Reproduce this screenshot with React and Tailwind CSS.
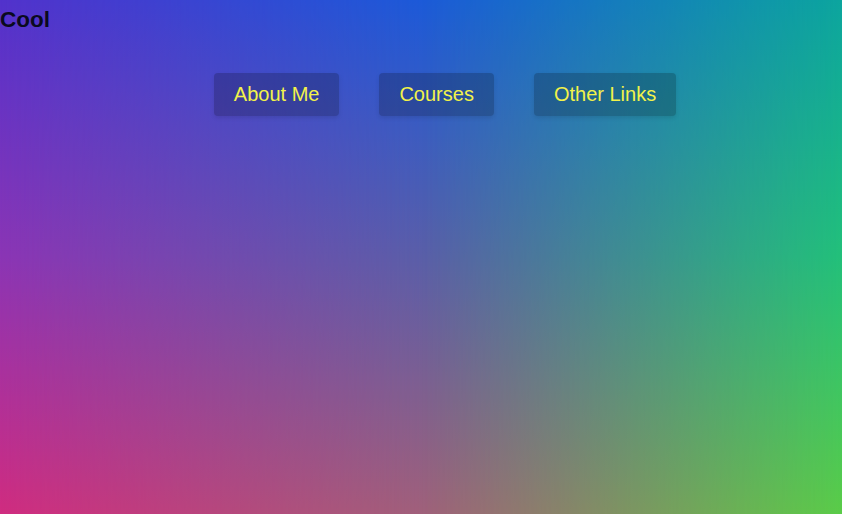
export default function App() {
  return (
    <div className="relative w-full h-[514px] overflow-hidden">
      <div className="absolute inset-0 bg-[linear-gradient(to_bottom,#5232cc,#8b35b5,#d02c80)]" />
      <div className="absolute inset-0 bg-[linear-gradient(to_bottom,#1c5ad8,#5a5ea8,#a0607a)] [mask-image:linear-gradient(to_right,transparent_0%,black_50%)]" />
      <div className="absolute inset-0 bg-[linear-gradient(to_bottom,#0ca59e,#22c07a,#5acc48)] [mask-image:linear-gradient(to_right,transparent_50%,black_100%)]" />
      <div className="relative font-['Liberation_Sans',Arial,sans-serif]">
        <h1 className="text-[22.5px] font-bold leading-[26px] pt-[7px] text-[#0a0a1e]">Cool</h1>
        <nav className="flex justify-center gap-[40px] pl-[48px] mt-[40px]">
          {["About Me", "Courses", "Other Links"].map((t) => (
            <a key={t} className="block px-[20px] py-[10px] text-[20px] leading-[23px] text-[#f2f24a] bg-black/20 rounded-[4px] shadow-[0_2px_4px_rgba(0,0,0,0.1)]">
              {t}
            </a>
          ))}
        </nav>
      </div>
    </div>
  );
}
